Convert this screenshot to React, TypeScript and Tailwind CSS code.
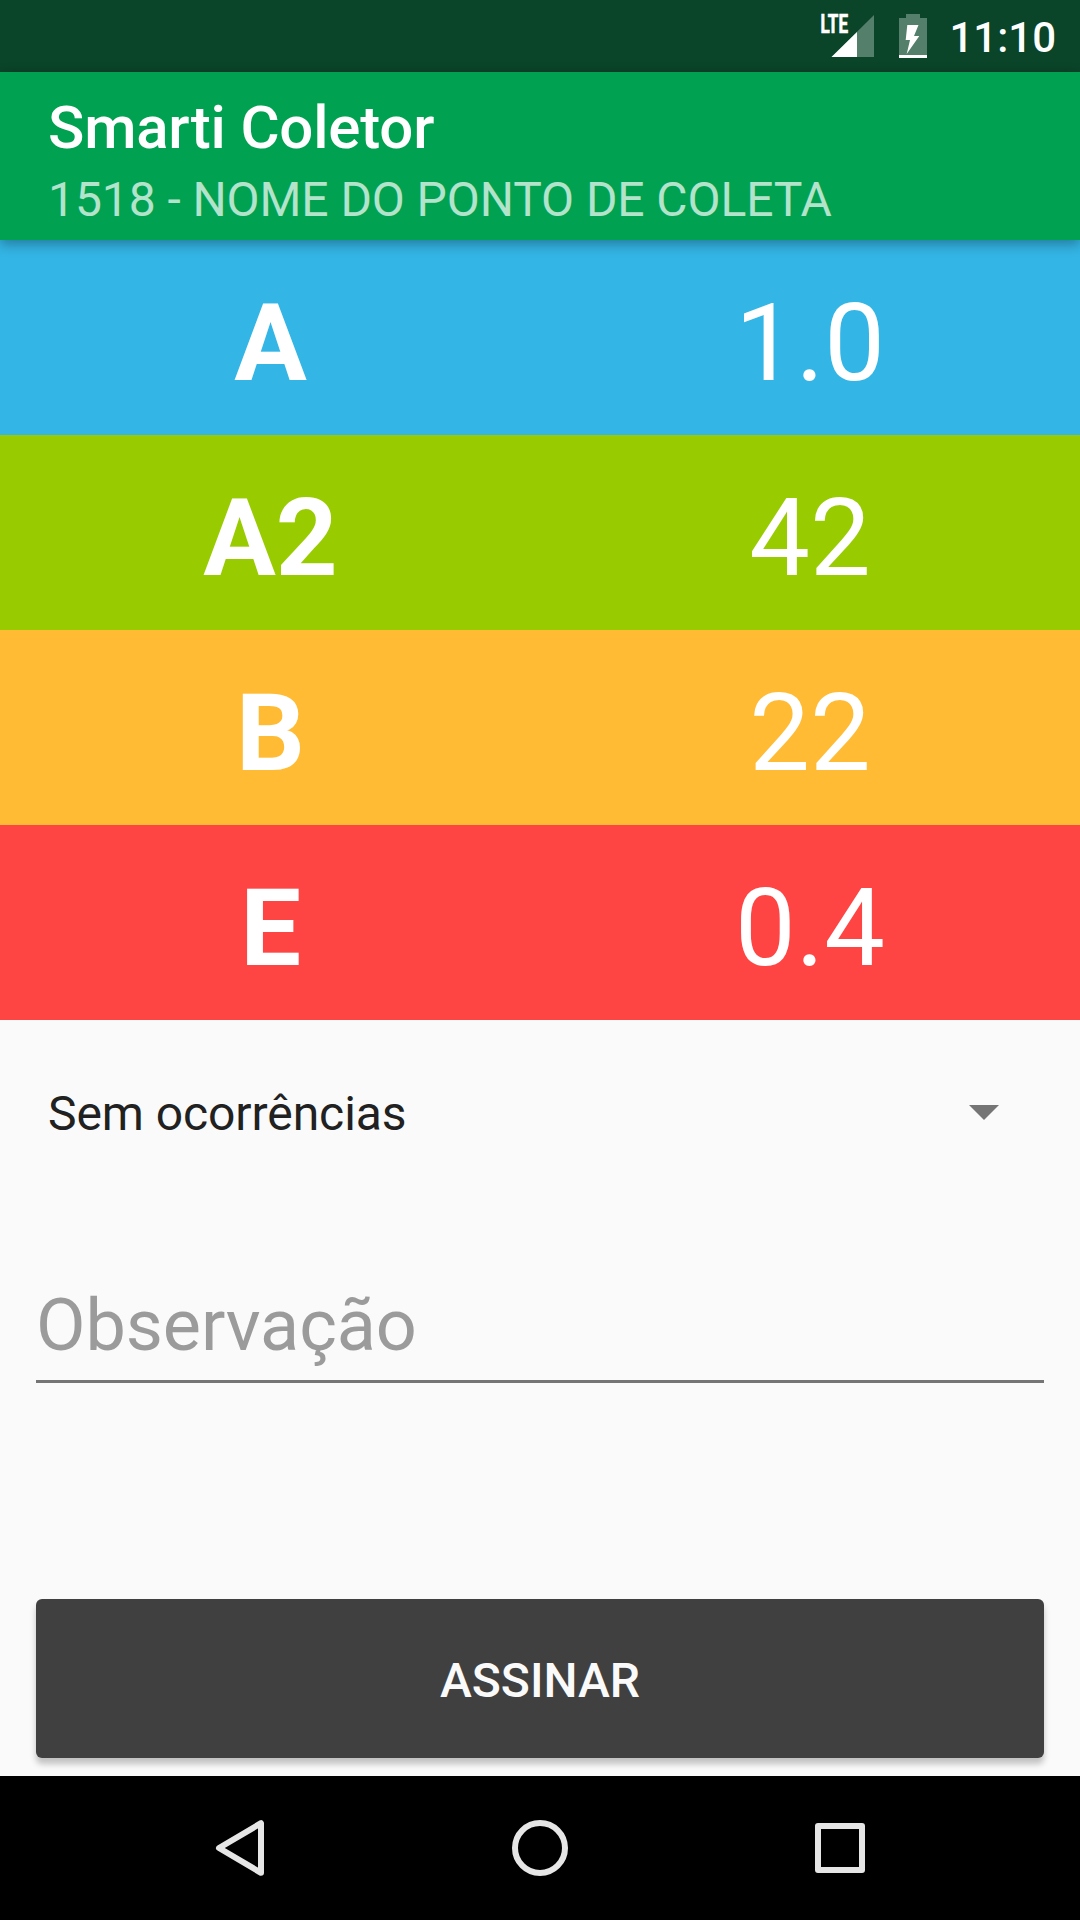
/** Coletor — collection form screen: readings table, occurrence picker, note and sign button. */

type Reading = { code: string; value: string; bg: string };

const READINGS: Reading[] = [
  { code: "A", value: "1.0", bg: "bg-[#33b5e5]" },
  { code: "A2", value: "42", bg: "bg-[#99cc00]" },
  { code: "B", value: "22", bg: "bg-[#ffbb33]" },
  { code: "E", value: "0.4", bg: "bg-[#ff4444]" },
];

function SignalIcon() {
  return (
    <svg width="54" height="72" viewBox="0 0 54 72">
      <path d="M54 15V57H11.5Z" fill="#547f6a" />
      <path d="M37 32V57H11.5Z" fill="#fff" />
      <text
        x="0.5"
        y="33.3"
        fill="#fff"
        stroke="#fff"
        strokeWidth="0.7"
        fontSize="25.5"
        fontWeight="700"
        textLength="27.5"
        lengthAdjust="spacingAndGlyphs"
      >
        LTE
      </text>
    </svg>
  );
}

function BatteryIcon() {
  return (
    <svg width="28" height="72" viewBox="0 0 28 72">
      <path d="M7 14H21V18H28V55H0V18H7Z" fill="#547f6a" />
      <path d="M0 55H28V58H0Z" fill="#fff" />
      <path d="M8.3 25H19.5L15 36H20.3L7.7 54L11 40H6.7Z" fill="#fff" />
    </svg>
  );
}

function StatusBar() {
  return (
    <div className="flex h-[72px] items-center justify-end bg-[#0a4429] pr-[24px] text-white">
      <SignalIcon />
      <div className="ml-[25px]">
        <BatteryIcon />
      </div>
      <span className="ml-[22px] pt-[3px] text-[42px] leading-[72px] font-medium">11:10</span>
    </div>
  );
}

function AppBar() {
  return (
    <header className="relative z-10 h-[168px] bg-[#00a251] pt-[21px] pl-[48px] shadow-[0_4px_12px_rgba(0,0,0,0.33)]">
      <h1 className="text-[60px] leading-[70px] font-medium tracking-[-0.2px] text-white">Smarti Coletor</h1>
      <p className="mt-[9px] text-[48px] leading-[56px] tracking-[-0.08px] text-[#b3e3cb]">
        1518 - NOME DO PONTO DE COLETA
      </p>
    </header>
  );
}

function ReadingRow({ code, value, bg }: Reading) {
  return (
    <div className={`grid h-[195px] grid-cols-2 items-center pt-[11px] text-center text-[108px] leading-[126px] text-white ${bg}`}>
      <span className="pl-px font-bold">{code}</span>
      <span>{value}</span>
    </div>
  );
}

function NavBar() {
  return (
    <nav className="flex h-[144px] items-center justify-between bg-black px-[210px]">
      <svg width="60" height="60" viewBox="0 0 60 60" fill="none" stroke="#e6e6e6" strokeWidth="6" strokeLinejoin="round">
        <path d="M51 5.2V54.8L9 30Z" />
      </svg>
      <svg width="60" height="60" viewBox="0 0 60 60" fill="none" stroke="#e6e6e6" strokeWidth="6">
        <circle cx="30" cy="30" r="25" />
      </svg>
      <svg width="60" height="60" viewBox="0 0 60 60" fill="none" stroke="#e6e6e6" strokeWidth="6" strokeLinejoin="round">
        <path d="M8 8H52V52H8Z" />
      </svg>
    </nav>
  );
}

export default function App() {
  return (
    <div className="flex h-[1920px] w-[1080px] flex-col overflow-hidden bg-[#fafafa] font-[Roboto,sans-serif]">
      <StatusBar />
      <AppBar />
      <section>
        {READINGS.map((r) => <ReadingRow key={r.code} {...r} />)}
      </section>

      <main className="flex flex-1 flex-col px-[36px] pb-[18px]">
        <button className="mt-[66px] flex items-center justify-between pr-[45px] pl-[12px] text-[48px] leading-[56px] tracking-[-0.07px] text-[#212121]">
          Sem ocorrências
          <svg className="mb-[3px]" width="30" height="15" viewBox="0 0 30 15">
            <path d="M0 0H30L15 15Z" fill="#757575" />
          </svg>
        </button>
        <div className="mt-[142px] h-[99px] border-b-[3px] border-[#757575] text-[72px] leading-[84px] tracking-[-0.1px] text-[#9b9b9b]">
          Observação
        </div>
        <button className="mt-auto h-[159px] rounded-[6px] bg-[#404040] pt-[4px] text-[48px] font-medium text-[#fafafa] shadow-[0_6px_6px_rgba(0,0,0,0.23)]">
          ASSINAR
        </button>
      </main>

      <NavBar />
    </div>
  );
}
